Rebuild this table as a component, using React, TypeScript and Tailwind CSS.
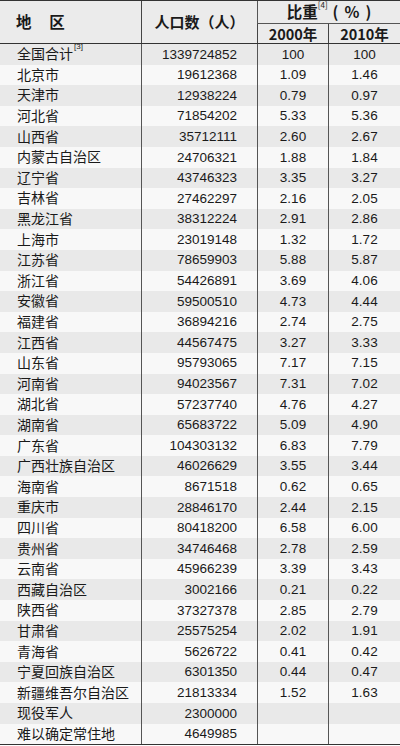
const rows: [string, string, string, string, string?][] = [
  ["全国合计", "1339724852", "100", "100", "[3]"],
  ["北京市", "19612368", "1.09", "1.46"],
  ["天津市", "12938224", "0.79", "0.97"],
  ["河北省", "71854202", "5.33", "5.36"],
  ["山西省", "35712111", "2.60", "2.67"],
  ["内蒙古自治区", "24706321", "1.88", "1.84"],
  ["辽宁省", "43746323", "3.35", "3.27"],
  ["吉林省", "27462297", "2.16", "2.05"],
  ["黑龙江省", "38312224", "2.91", "2.86"],
  ["上海市", "23019148", "1.32", "1.72"],
  ["江苏省", "78659903", "5.88", "5.87"],
  ["浙江省", "54426891", "3.69", "4.06"],
  ["安徽省", "59500510", "4.73", "4.44"],
  ["福建省", "36894216", "2.74", "2.75"],
  ["江西省", "44567475", "3.27", "3.33"],
  ["山东省", "95793065", "7.17", "7.15"],
  ["河南省", "94023567", "7.31", "7.02"],
  ["湖北省", "57237740", "4.76", "4.27"],
  ["湖南省", "65683722", "5.09", "4.90"],
  ["广东省", "104303132", "6.83", "7.79"],
  ["广西壮族自治区", "46026629", "3.55", "3.44"],
  ["海南省", "8671518", "0.62", "0.65"],
  ["重庆市", "28846170", "2.44", "2.15"],
  ["四川省", "80418200", "6.58", "6.00"],
  ["贵州省", "34746468", "2.78", "2.59"],
  ["云南省", "45966239", "3.39", "3.43"],
  ["西藏自治区", "3002166", "0.21", "0.22"],
  ["陕西省", "37327378", "2.85", "2.79"],
  ["甘肃省", "25575254", "2.02", "1.91"],
  ["青海省", "5626722", "0.41", "0.42"],
  ["宁夏回族自治区", "6301350", "0.44", "0.47"],
  ["新疆维吾尔自治区", "21813334", "1.52", "1.63"],
  ["现役军人", "2300000", "", ""],
  ["难以确定常住地", "4649985", "", ""],
];

const font = "font-['Liberation_Sans','Noto_Sans_CJK_SC',sans-serif]";

export default function App() {
  return (
    <div className={`w-[400px] h-[746px] bg-white text-[#1a1a1a] ${font}`}>
      {/* header */}
      <div className="grid grid-cols-[141px_116px_71px_72px] grid-rows-[23px_19px] border-t border-b border-[#333] bg-[#ebebeb] font-['Noto_Sans_CJK_SC',sans-serif] font-bold">
        <div className="row-span-2 flex items-center pl-[16px] text-[15.5px] tracking-[0.05em]">
          <span>地</span>
          <span className="ml-[17px]">区</span>
        </div>
        <div className="row-span-2 flex items-center justify-center border-l border-[#444] text-[15px]">
          人口数（人）
        </div>
        <div className="col-span-2 flex items-center justify-center border-l border-b border-[#555] text-[15.5px] leading-none">
          比重<sup className="text-[8px] font-normal -mt-[6px]">[4]</sup>
          <span className="ml-[5px]">(</span>
          <span className="mx-[6px]">%</span>
          <span>)</span>
        </div>
        <div className="flex items-center justify-center border-l border-[#444] text-[14.5px]">
          2000年
        </div>
        <div className="flex items-center justify-center border-l border-[#444] text-[14.5px]">
          2010年
        </div>
      </div>
      {/* body */}
      <div className="border-b border-[#333]">
        {rows.map(([name, pop, a, b, note], i) => (
          <div
            key={name}
            className={`grid grid-cols-[141px_116px_71px_72px] h-[20.6px] text-[13.5px] leading-none ${i % 2 === 0 ? "bg-[#e9e9e9]" : "bg-[#f8f8f8]"}`}
          >
            <div className="flex items-center pl-[17px] text-[14px]">
              {name}
              {note && <sup className="text-[8px] ml-[1px] -mt-[6px]">{note}</sup>}
            </div>
            <div className="flex items-center justify-end pr-[20px] border-l border-[#555]">{pop}</div>
            <div className="flex items-center justify-center border-l border-[#555]">{a}</div>
            <div className="flex items-center justify-center border-l border-[#555]">{b}</div>
          </div>
        ))}
      </div>
    </div>
  );
}
